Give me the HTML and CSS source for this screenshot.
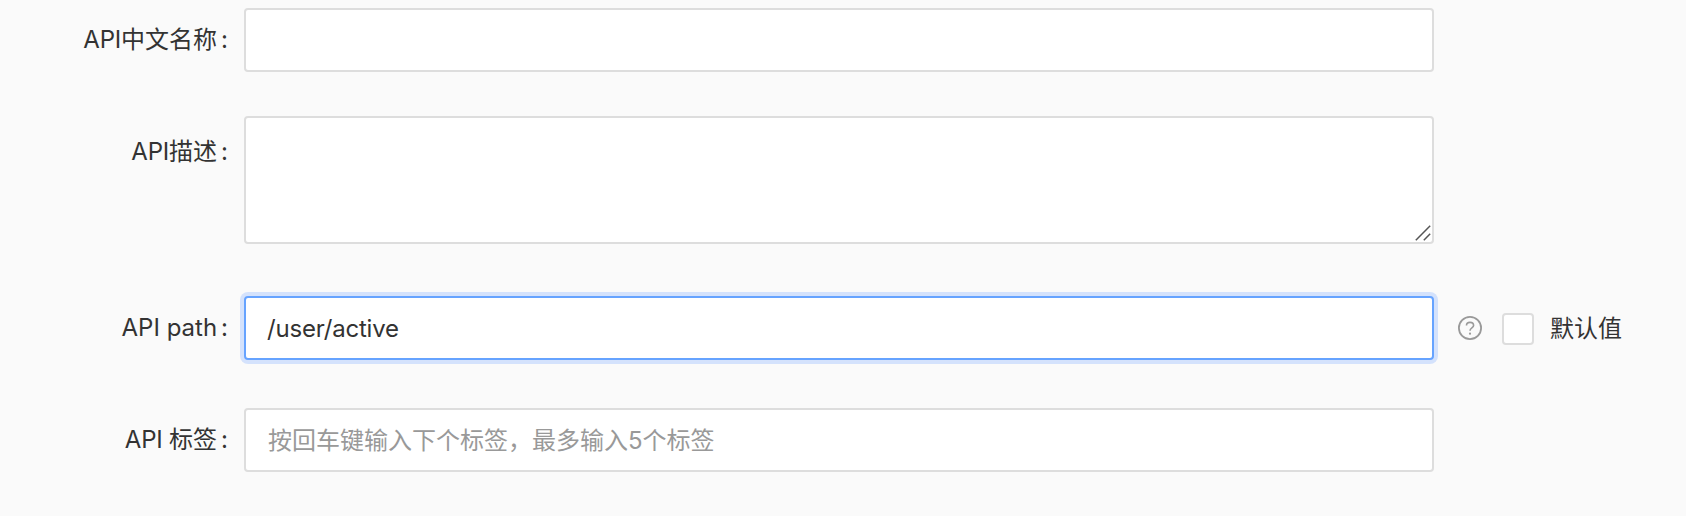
FILE: index.html
```html
<!DOCTYPE html>
<html lang="zh-CN">
<head>
<meta charset="utf-8">
<title>API</title>
<link rel="stylesheet" href="styles.css">
</head>
<body>
<form class="form">
  <div class="row">
    <label class="label" for="name"><span class="latin">API</span>中文名称<span class="colon">:</span></label>
    <input class="field" id="name" type="text">
  </div>
  <div class="row row-desc">
    <label class="label label-desc" for="desc"><span class="latin">API</span>描述<span class="colon">:</span></label>
    <div class="area-wrap">
      <textarea class="field area" id="desc"></textarea>
      <svg class="grip" width="16" height="16" viewBox="0 0 16 16"><path d="M.8 15.2 15.2.8M8.8 15.2l6.4-6.4" fill="none" stroke="#555" stroke-width="1.5"/></svg>
    </div>
  </div>
  <div class="row row-path">
    <label class="label" for="path"><span class="path-text">API path</span><span class="colon">:</span></label>
    <input class="field active" id="path" type="text" value="/user/active">
    <svg class="help" width="24" height="24" viewBox="0 0 24 24" fill="none" stroke="#999"><circle cx="12" cy="12" r="11.1" stroke-width="1.8"/><path d="M8.5 9.4C8.5 7.5 9.9 6.4 12 6.4s3.6 1.2 3.6 3c0 2.5-3.6 2.5-3.6 5.3" stroke-width="1.6"/><circle cx="12" cy="17.7" r="1.1" fill="#999" stroke="none"/></svg>
    <label class="default"><input class="check" type="checkbox"><span class="default-text">默认值</span></label>
  </div>
  <div class="row">
    <label class="label" for="tags"><span class="latin">API </span>标签<span class="colon">:</span></label>
    <input class="field" id="tags" type="text" placeholder="按回车键输入下个标签，最多输入5个标签">
  </div>
</form>
</body>
</html>
```
FILE: styles.css
```css
body {
  margin: 0;
  background: #fafafa;
  color: #333;
  font: 24px/36px Inter, "Noto Sans CJK SC", sans-serif;
}
.form {
  display: flex;
  flex-direction: column;
  padding-top: 8px;
}
.row {
  display: flex;
  align-items: center;
  margin-bottom: 44px;
}
.row-desc { align-items: flex-start; margin-bottom: 52px; }
.row-path { margin-bottom: 48px; }
.label {
  width: 228px;
  margin-right: 16px;
  text-align: right;
  white-space: pre;
  line-height: 64px;
  height: 64px;
}
.label-desc { padding-top: 4px; }
.latin { letter-spacing: -0.2px; }
.path-text { letter-spacing: 0; }
.colon { margin-left: 4px; }
.field {
  box-sizing: border-box;
  width: 1190px;
  height: 64px;
  margin: 0;
  padding: 0 22px;
  border: 2px solid #ddd;
  border-radius: 4px;
  background: #fff;
  color: #333;
  font: inherit;
  outline: none;
}
.field::placeholder { color: #999; opacity: 1; }
.area-wrap { position: relative; height: 128px; }
.area { display: block; height: 128px; resize: none; }
.grip { position: absolute; right: 3px; bottom: 3px; }
.active {
  padding-left: 21px;
  border-color: #66a3ff;
  box-shadow: 0 0 0 4px #d4e2fc;
  letter-spacing: -0.2px;
}
.help { margin: 0 20px 0 24px; }
.default { display: flex; align-items: center; gap: 16px; }
.default-text { padding-top: 2px; }
.check {
  appearance: none;
  box-sizing: border-box;
  width: 32px;
  height: 32px;
  margin: 2px 0 0;
  border: 2px solid #ddd;
  border-radius: 4px;
  background: #fff;
}
```
